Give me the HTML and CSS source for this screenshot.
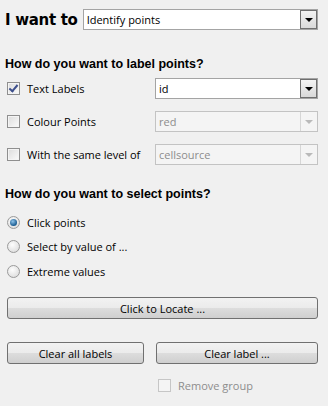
FILE: index.html
```html
<!DOCTYPE html>
<html lang="en">
<head>
    <meta charset="UTF-8">
    <title>Identify points</title>
    <link rel="stylesheet" href="styles.css">
</head>
<body>
    <div class="panel">
        <div class="top-row">
            <span class="want">I want to</span>
            <div class="combo">
                <span class="combo-text">Identify points</span>
                <span class="combo-btn"><span class="arrow"></span></span>
            </div>
        </div>

        <h2 class="section">How do you want to label points?</h2>
        <div class="label-grid">
            <label class="check"><span class="box checked"></span>Text Labels</label>
            <div class="combo">
                <span class="combo-text">id</span>
                <span class="combo-btn"><span class="arrow"></span></span>
            </div>

            <label class="check"><span class="box"></span>Colour Points</label>
            <div class="combo disabled">
                <span class="combo-text">red</span>
                <span class="combo-btn"><span class="arrow"></span></span>
            </div>

            <label class="check"><span class="box"></span>With the same level of</label>
            <div class="combo disabled">
                <span class="combo-text">cellsource</span>
                <span class="combo-btn"><span class="arrow"></span></span>
            </div>
        </div>

        <h2 class="section second">How do you want to select points?</h2>
        <div class="radios">
            <label class="radio"><span class="dot on"></span>Click points</label>
            <label class="radio"><span class="dot"></span>Select by value of ...</label>
            <label class="radio"><span class="dot"></span>Extreme values</label>
        </div>

        <button class="win-btn locate">Click to Locate ...</button>

        <div class="btn-row">
            <button class="win-btn">Clear all labels</button>
            <button class="win-btn">Clear label ...</button>
        </div>

        <div class="remove-row">
            <label class="check disabled"><span class="box"></span>Remove group</label>
        </div>
    </div>
</body>
</html>
```

FILE: styles.css
```css
body {
    margin: 0;
    background: #f0f0f0;
    font-family: "Open Sans", "Noto Sans", sans-serif;
    font-size: 11px;
    color: #000;
}

.panel {
    padding: 9px 10px 0 5px;
}

.top-row {
    display: flex;
    align-items: center;
    gap: 5px;
}

.want {
    font-family: "DejaVu Sans", sans-serif;
    font-weight: bold;
    font-size: 15px;
    letter-spacing: -0.3px;
}

/* combo box */
.combo {
    flex: 1;
    display: flex;
    height: 21px;
    box-sizing: border-box;
    border: 1px solid #a4a4a4;
    background: #fff;
}

.combo-text {
    flex: 1;
    padding-left: 3px;
    line-height: 19px;
}

.combo-btn {
    width: 17px;
    border: 1px solid #6f6f6f;
    background: linear-gradient(#f3f3f3, #d9d9d9);
    display: flex;
    align-items: center;
    justify-content: center;
    box-sizing: border-box;
}

.arrow {
    width: 0;
    height: 0;
    border-left: 4px solid transparent;
    border-right: 4px solid transparent;
    border-top: 4px solid #000;
}

.combo.disabled {
    background: #f4f4f4;
    border-color: #c3c3c3;
    color: #8d8d8d;
}

.combo.disabled .combo-btn {
    border: none;
    border-left: 1px solid #d6d6d6;
    background: #f4f4f4;
}

.combo.disabled .arrow {
    border-top-color: #b9b9b9;
}

.section {
    font-family: "Liberation Sans", sans-serif;
    font-weight: bold;
    font-size: 12.5px;
    margin: 26px 0 0 0;
    line-height: 16px;
}

.section.second {
    margin-top: 21px;
}

.label-grid {
    display: grid;
    grid-template-columns: 148px 1fr;
    row-gap: 12px;
    margin-top: 6px;
    padding-left: 2px;
}

.check {
    display: flex;
    align-items: center;
    gap: 7px;
}

.box {
    width: 13px;
    height: 13px;
    box-sizing: border-box;
    border: 1px solid #8f8f8f;
    background: linear-gradient(135deg, #dcdcdc, #fbfbfb);
    box-shadow: inset 0 0 0 1px #f4f4f4;
    position: relative;
}

.box.checked::after {
    content: "";
    position: absolute;
    left: 3px;
    top: 0px;
    width: 3px;
    height: 7px;
    border: solid #3d4f8c;
    border-width: 0 2px 2px 0;
    transform: rotate(40deg);
}

.check.disabled {
    color: #8d8d8d;
}

.check.disabled .box {
    border-color: #c6c6c6;
    background: #f4f4f4;
    box-shadow: none;
}

.radios {
    display: flex;
    flex-direction: column;
    gap: 8.5px;
    margin-top: 12px;
    padding-left: 2px;
}

.radio {
    display: flex;
    align-items: center;
    gap: 7px;
    height: 16px;
}

.dot {
    width: 13px;
    height: 13px;
    box-sizing: border-box;
    border-radius: 50%;
    border: 1px solid #9a9a9a;
    background: radial-gradient(circle at 40% 35%, #fdfdfd, #d6d6d6);
    position: relative;
}

.dot.on::after {
    content: "";
    position: absolute;
    left: 2px;
    top: 2px;
    width: 7px;
    height: 7px;
    border-radius: 50%;
    background: radial-gradient(circle at 40% 35%, #8ec3ea, #175a90 70%);
}

.win-btn {
    display: block;
    height: 22px;
    box-sizing: border-box;
    border: 1px solid #707070;
    border-radius: 3px;
    background: linear-gradient(#f2f2f2 0%, #ebebeb 50%, #dddddd 50%, #cfcfcf 100%);
    font-family: "Open Sans", "Noto Sans", sans-serif;
    font-size: 11px;
    color: #000;
    padding: 0;
}

.locate {
    width: 311px;
    margin: 18px 0 0 2px;
}

.btn-row {
    display: grid;
    grid-template-columns: 137px 162px;
    column-gap: 12px;
    margin: 23px 0 0 2px;
}

.btn-row .win-btn {
    width: 100%;
}

.remove-row {
    margin: 14px 0 0 153px;
}
```
